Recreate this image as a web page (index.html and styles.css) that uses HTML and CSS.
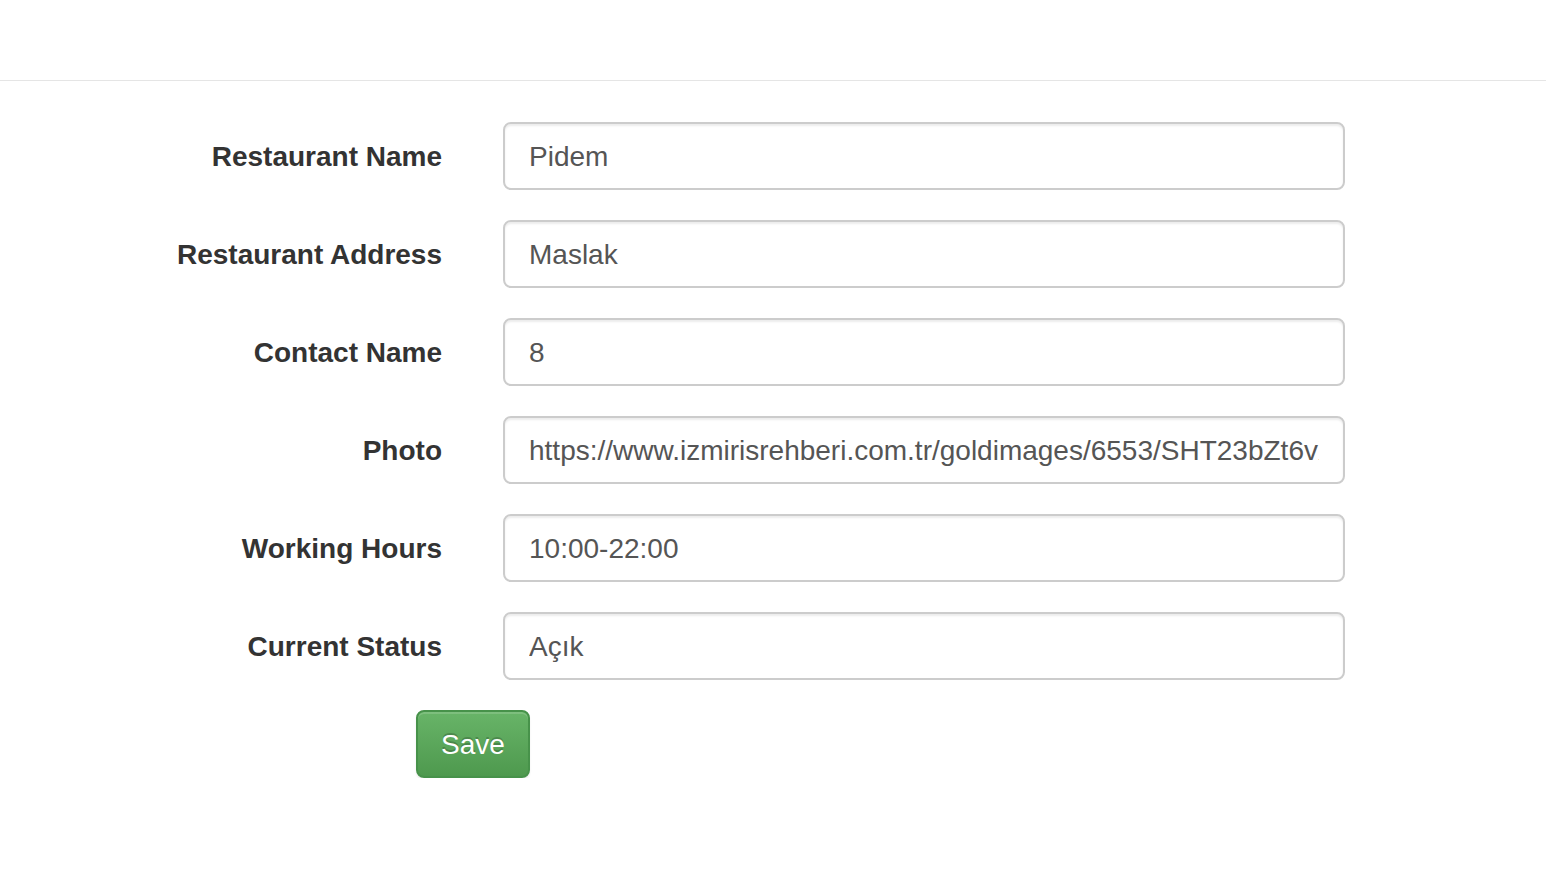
FILE: index.html
```html
<!DOCTYPE html>
<html>
<head>
<meta charset="utf-8">
<link rel="stylesheet" href="styles.css">
</head>
<body>
<header class="topbar"></header>
<form class="form">
  <div class="row">
    <label class="label">Restaurant Name</label>
    <input class="field" type="text" value="Pidem">
  </div>
  <div class="row">
    <label class="label">Restaurant Address</label>
    <input class="field" type="text" value="Maslak">
  </div>
  <div class="row">
    <label class="label">Contact Name</label>
    <input class="field" type="text" value="8">
  </div>
  <div class="row">
    <label class="label">Photo</label>
    <input class="field" type="text" value="https://www.izmirisrehberi.com.tr/goldimages/6553/SHT23bZt6vX.jpg">
  </div>
  <div class="row">
    <label class="label">Working Hours</label>
    <input class="field" type="text" value="10:00-22:00">
  </div>
  <div class="row">
    <label class="label">Current Status</label>
    <input class="field" type="text" value="Açık">
  </div>
  <div class="actions">
    <button class="btn-save" type="button">Save</button>
  </div>
</form>
</body>
</html>
```

FILE: styles.css
```css
html, body {
  margin: 0;
  padding: 0;
  background: #fff;
  font-family: "Liberation Sans", Arial, Helvetica, sans-serif;
}
.topbar {
  height: 80px;
  border-bottom: 1px solid #e5e5e5;
}
.form {
  padding-top: 41px;
  display: flex;
  flex-direction: column;
}
.row {
  display: flex;
  align-items: center;
  margin-bottom: 30px;
}
.label {
  flex: 0 0 503px;
  box-sizing: border-box;
  text-align: right;
  font-weight: bold;
  font-size: 28px;
  color: #333;
  padding-right: 61px;
  padding-top: 2px;
}
.field {
  box-sizing: border-box;
  width: 842px;
  height: 68px;
  padding: 13px 24px 11px;
  border: 2px solid #ccc;
  border-radius: 8px;
  font-family: "Liberation Sans", Arial, Helvetica, sans-serif;
  font-size: 28px;
  color: #555;
  background: #fff;
  box-shadow: inset 0 2px 2px rgba(0,0,0,.075);
  outline: none;
}
.actions {
  padding-left: 416px;
}
.btn-save {
  box-sizing: border-box;
  width: 114px;
  height: 68px;
  font-family: "Liberation Sans", Arial, Helvetica, sans-serif;
  font-size: 28px;
  color: #fff;
  border: 2px solid #47924a;
  border-radius: 8px;
  background: linear-gradient(to bottom, #68b468 0%, #4e994e 100%);
  text-shadow: 0 -2px 0 rgba(0,0,0,.2);
  box-shadow: inset 0 2px 0 rgba(255,255,255,.15), 0 2px 2px rgba(0,0,0,.075);
  padding: 2px 0 0;
}
```
